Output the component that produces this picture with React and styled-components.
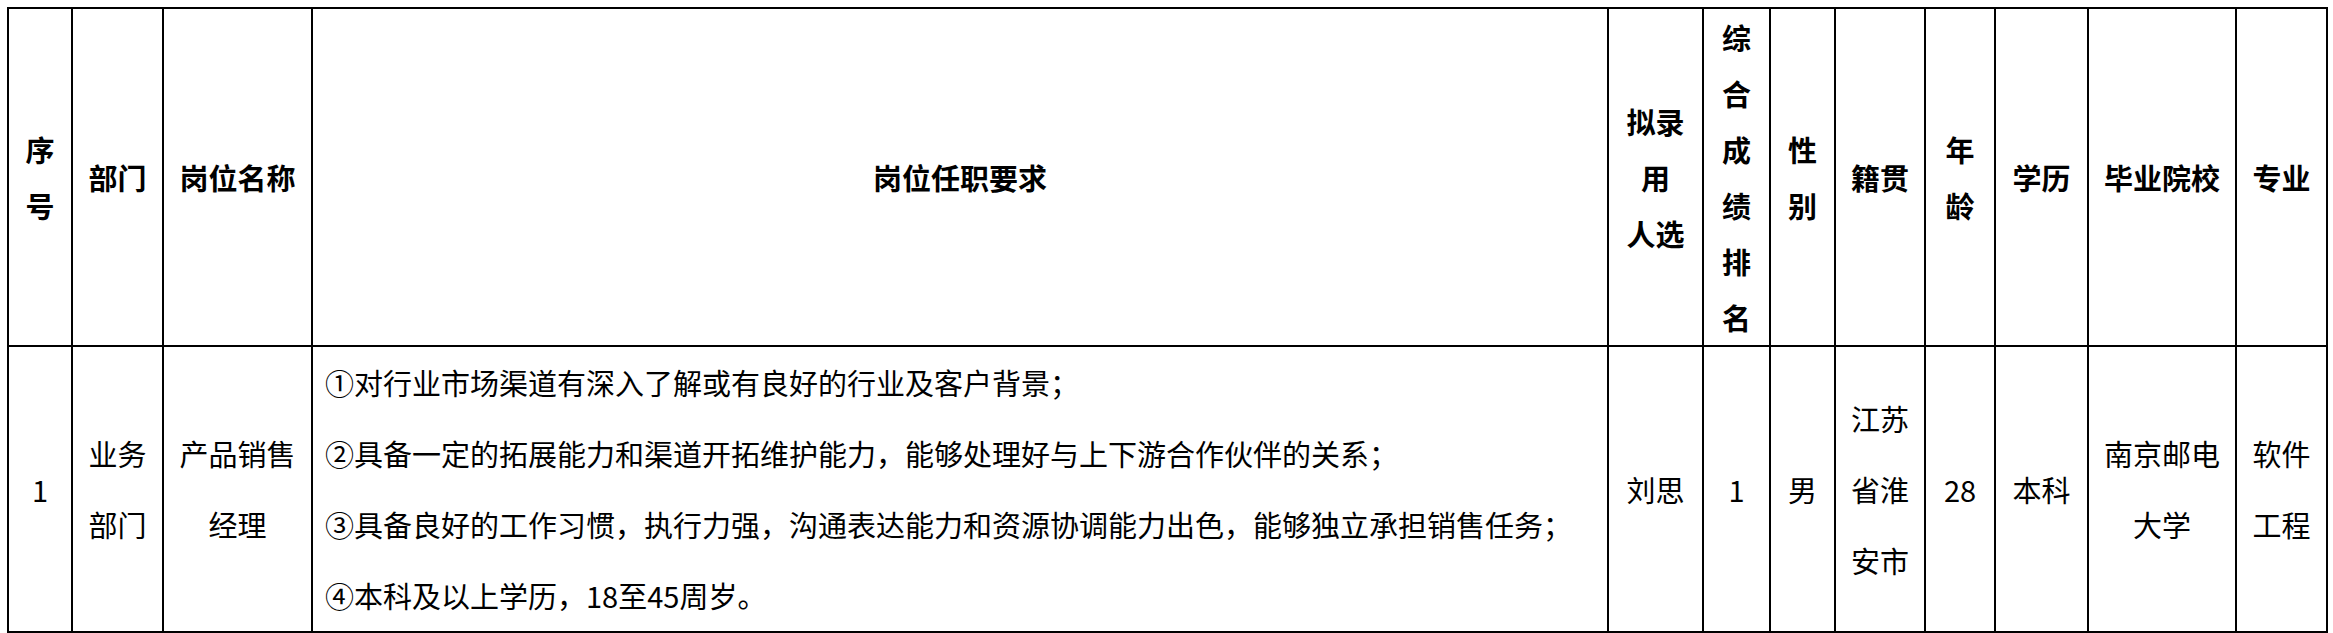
import React from 'react';
import styled, { createGlobalStyle } from 'styled-components';

const GlobalStyle = createGlobalStyle`
  body {
    margin: 0;
    background: #fff;
  }
`;

const columns = [64, 91, 149, 1296, 95, 67, 65, 90, 70, 93, 148, 91];

const headers = [
    ['序', '号'],
    ['部门'],
    ['岗位名称'],
    ['岗位任职要求'],
    ['拟录', '用', '人选'],
    ['综', '合', '成', '绩', '排', '名'],
    ['性', '别'],
    ['籍贯'],
    ['年', '龄'],
    ['学历'],
    ['毕业院校'],
    ['专业'],
];

const requirements = [
    '①对行业市场渠道有深入了解或有良好的行业及客户背景；',
    '②具备一定的拓展能力和渠道开拓维护能力，能够处理好与上下游合作伙伴的关系；',
    '③具备良好的工作习惯，执行力强，沟通表达能力和资源协调能力出色，能够独立承担销售任务；',
    '④本科及以上学历，18至45周岁。',
];

const rows = [
    [
        ['1'],
        ['业务', '部门'],
        ['产品销售', '经理'],
        requirements,
        ['刘思'],
        ['1'],
        ['男'],
        ['江苏', '省淮', '安市'],
        ['28'],
        ['本科'],
        ['南京邮电', '大学'],
        ['软件', '工程'],
    ],
];

const App = () => {
    return (
        <Page>
            <GlobalStyle />
            <Table>
                <colgroup>
                    {columns.map((w, i) => (
                        <col key={i} style={{ width: w }} />
                    ))}
                </colgroup>
                <thead>
                    <HeadRow>
                        {headers.map((lines, i) => (
                            <HeadCell key={i}>
                                {lines.map((l) => (
                                    <Line key={l}>{l}</Line>
                                ))}
                            </HeadCell>
                        ))}
                    </HeadRow>
                </thead>
                <tbody>
                    {rows.map((row, r) => (
                        <BodyRow key={r}>
                            {row.map((lines, i) => (
                                <Cell key={i} $left={lines === requirements}>
                                    {lines.map((l) => (
                                        <Line key={l}>{l}</Line>
                                    ))}
                                </Cell>
                            ))}
                        </BodyRow>
                    ))}
                </tbody>
            </Table>
        </Page>
    );
};

export default App;

const Page = styled.div`
  padding: 7px;
  font-family: "Noto Sans CJK SC", "Microsoft YaHei", sans-serif;
  color: #000;
`;

const Table = styled.table`
  border-collapse: collapse;
  table-layout: fixed;
  width: 2321px;
`;

const HeadRow = styled.tr`
  height: 336px;
`;

const BodyRow = styled.tr`
  height: 284px;
`;

const HeadCell = styled.th`
  border: 2px solid #000;
  padding: 0;
  font-size: 29px;
  font-weight: 700;
  line-height: 56px;
  text-align: center;
  vertical-align: middle;
`;

const Cell = styled.td`
  border: 2px solid #000;
  padding: ${(p) => (p.$left ? '0 0 0 12px' : '0')};
  font-size: 29px;
  font-weight: 400;
  line-height: 71px;
  text-align: ${(p) => (p.$left ? 'left' : 'center')};
  vertical-align: middle;
`;

const Line = styled.span`
  display: block;
  white-space: nowrap;
`;
